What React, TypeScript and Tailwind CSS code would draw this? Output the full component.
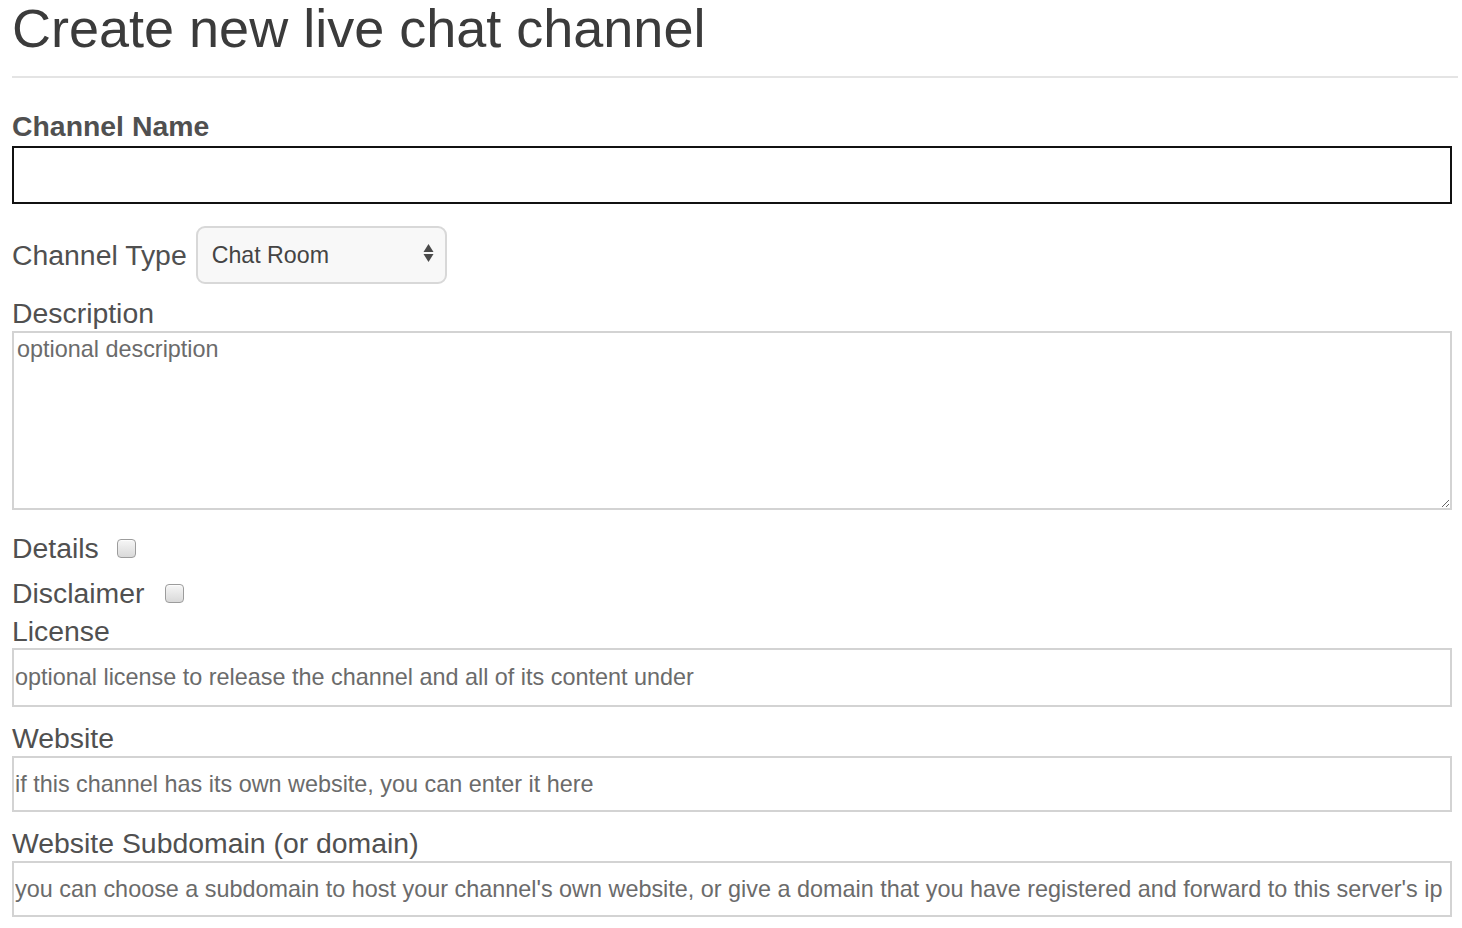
import React from "react";

const font = { fontFamily: '"Liberation Sans", Arial, Helvetica, sans-serif' };

function Label({ children, className = "" }: { children: React.ReactNode; className?: string }) {
  return (
    <div className={`text-[28.4px] leading-[32px] text-[#505050] ${className}`}>{children}</div>
  );
}

function Checkbox() {
  return (
    <input
      type="checkbox"
      className="appearance-none w-[19px] h-[19px] rounded-[4px] border border-[#9c9c9c] bg-gradient-to-b from-[#f6f6f6] to-[#d9d9d9] shadow-[inset_0_1px_1px_rgba(255,255,255,0.8)]"
    />
  );
}

function TextInput({ placeholder, className = "" }: { placeholder: string; className?: string }) {
  return (
    <input
      type="text"
      placeholder={placeholder}
      className={`block w-full border-2 border-[#d3d3d3] bg-white pl-[1px] text-[23.4px] text-[#555] placeholder:text-[#6b6b6b] outline-none ${className}`}
      style={font}
    />
  );
}

export default function App() {
  return (
    <div className="min-h-[928px] bg-white pl-[12px] pr-[10px]" style={font}>
      <h1 className="-mt-[2px] text-[54px] leading-[60px] text-[#3b3b3b] font-normal">
        Create new live chat channel
      </h1>
      <div className="mt-[18px] mr-[-6px] h-[2px] bg-[#e4e4e4]" />

      <Label className="mt-[32px] font-bold">Channel Name</Label>
      <input
        type="text"
        className="mt-[4px] block w-full h-[58px] border-2 border-[#111] bg-white outline-none"
        style={font}
      />

      <div className="mt-[22px] flex items-center gap-[9px]">
        <Label>Channel Type</Label>
        <div className="relative">
          <select
            className="appearance-none w-[251px] h-[58px] rounded-[9px] border-2 border-[#d8d8d8] bg-[#f8f8f8] pl-[14px] text-[23.2px] text-[#444] outline-none"
            style={font}
            defaultValue="Chat Room"
          >
            <option>Chat Room</option>
            <option>Forum</option>
          </select>
          <svg
            className="pointer-events-none absolute right-[13px] top-[17px]"
            width="11"
            height="20"
            viewBox="0 0 11 20"
          >
            <path d="M5.5 1 L10.5 9 L0.5 9 Z" fill="#4a4a4a" />
            <path d="M0.5 11 L10.5 11 L5.5 19 Z" fill="#4a4a4a" />
          </svg>
        </div>
      </div>

      <Label className="mt-[13px]">Description</Label>
      <textarea
        placeholder="optional description"
        className="mt-[2px] block w-full h-[179px] border-2 border-[#d3d3d3] bg-white px-[3px] pt-[2px] text-[23.4px] leading-[28px] text-[#555] placeholder:text-[#6b6b6b] outline-none"
        style={font}
      />

      <div className="mt-[22px] flex items-center">
        <Label>Details</Label>
        <span className="ml-[18px] flex">
          <Checkbox />
        </span>
      </div>
      <div className="mt-[13px] flex items-center">
        <Label>Disclaimer</Label>
        <span className="ml-[20px] flex">
          <Checkbox />
        </span>
      </div>

      <Label className="mt-[6px]">License</Label>
      <TextInput
        className="mt-[1px] h-[59px]"
        placeholder="optional license to release the channel and all of its content under"
      />

      <Label className="mt-[15px]">Website</Label>
      <TextInput
        className="mt-[2px] h-[56px]"
        placeholder="if this channel has its own website, you can enter it here"
      />

      <Label className="mt-[15px]">Website Subdomain (or domain)</Label>
      <TextInput
        className="mt-[2px] h-[56px]"
        placeholder="you can choose a subdomain to host your channel's own website, or give a domain that you have registered and forward to this server's ip"
      />
    </div>
  );
}
